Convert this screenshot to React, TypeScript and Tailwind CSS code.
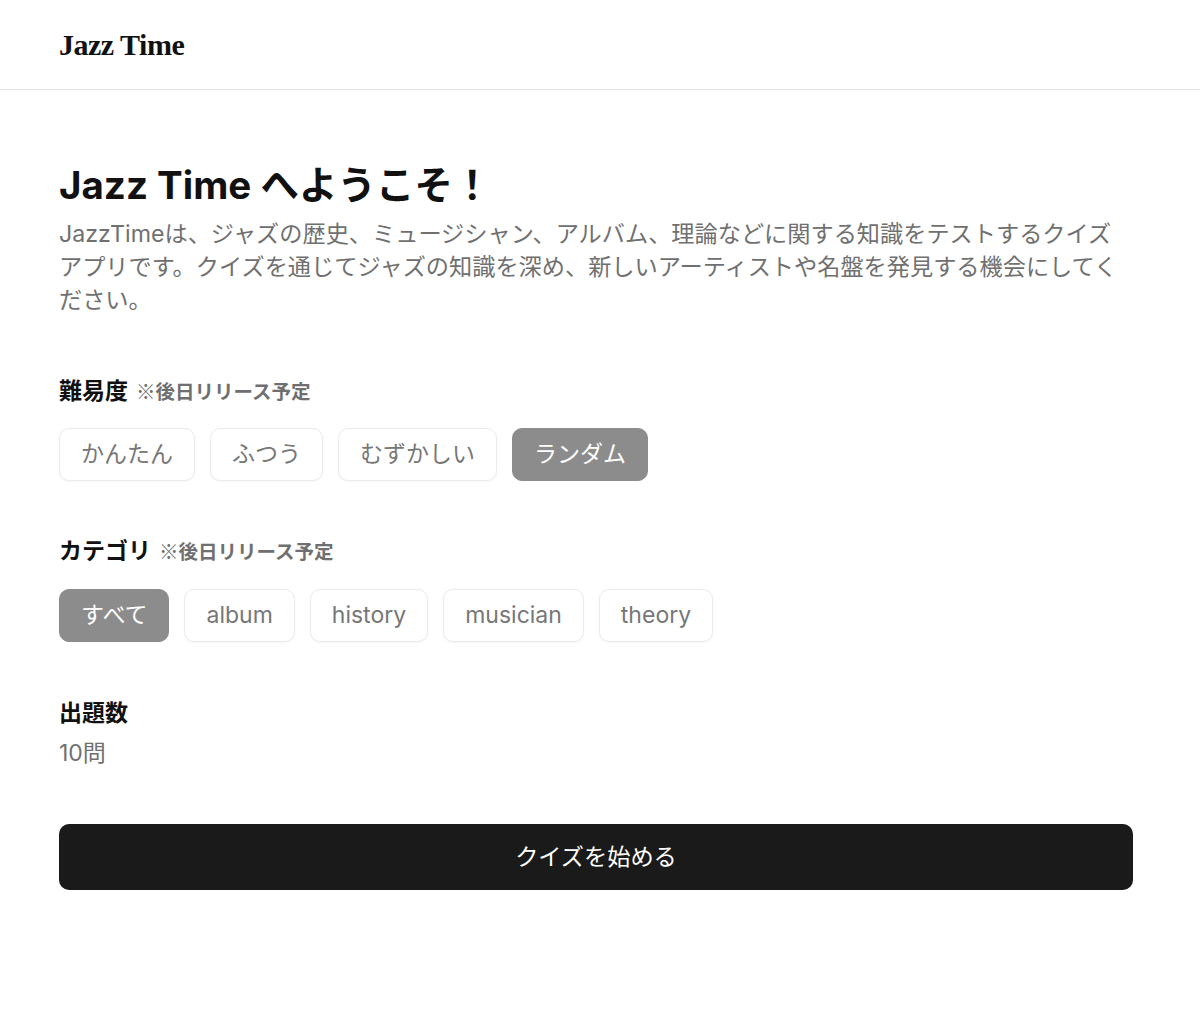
import React, { useState } from 'react';

const difficulties = ['かんたん', 'ふつう', 'むずかしい', 'ランダム'];
const categories = ['すべて', 'album', 'history', 'musician', 'theory'];

const font = "font-['Inter','Noto_Sans_CJK_JP',sans-serif]";

const Chip = ({ label, active, onClick }: { label: string; active: boolean; onClick: () => void }) => (
  <button
    onClick={onClick}
    className={
      active
        ? 'h-[53px] px-[21px] rounded-[10px] bg-[#8c8c8c] border border-[#8c8c8c] text-white text-[23px] leading-none'
        : 'h-[53px] px-[21px] rounded-[10px] bg-white border border-[#ebebeb] shadow-[0_1px_2px_rgba(0,0,0,0.04)] text-[#777777] text-[23px] leading-none'
    }
  >
    {label}
  </button>
);

const SectionLabel = ({ title }: { title: string }) => (
  <div className="flex items-baseline gap-[8px] leading-[28px]">
    <span className="text-[23px] font-bold text-[#111111]">{title}</span>
    <span className="font-['Noto_Sans_CJK_JP',sans-serif] text-[19.5px] font-bold text-[#6f6f6f]">※後日リリース予定</span>
  </div>
);

export default function App() {
  const [difficulty, setDifficulty] = useState('ランダム');
  const [category, setCategory] = useState('すべて');

  return (
    <div className={`min-h-screen bg-white ${font}`}>
      <header className="h-[90px] border-b border-[#e2e2e2] px-[59px] flex items-center">
        <span className="font-['Liberation_Serif',serif] font-bold text-[30px] tracking-[-0.5px] text-[#111111]">
          Jazz Time
        </span>
      </header>

      <main className="pl-[59px] pr-[67px] pt-[73px]">
        <h1 className="text-[38.5px] font-bold leading-[44px] text-[#111111]">
          Jazz Time へようこそ！
        </h1>
        <p className="mt-[11px] text-[23.2px] leading-[33px] text-[#707070]">
          JazzTimeは、ジャズの歴史、ミュージシャン、アルバム、理論などに関する知識をテストするクイズアプリです。クイズを通じてジャズの知識を深め、新しいアーティストや名盤を発見する機会にしてください。
        </p>

        <section className="mt-[60px]">
          <SectionLabel title="難易度" />
          <div className="mt-[23px] flex gap-[15px]">
            {difficulties.map(d => (
              <Chip key={d} label={d} active={difficulty === d} onClick={() => setDifficulty(d)} />
            ))}
          </div>
        </section>

        <section className="mt-[56px]">
          <SectionLabel title="カテゴリ" />
          <div className="mt-[24px] flex gap-[15px]">
            {categories.map(c => (
              <Chip key={c} label={c} active={category === c} onClick={() => setCategory(c)} />
            ))}
          </div>
        </section>

        <section className="mt-[57px]">
          <div className="text-[23px] font-bold leading-[28px] text-[#111111]">出題数</div>
          <div className="mt-[10px] text-[23px] leading-[33px] text-[#707070]">10問</div>
        </section>

        <button className="mt-[54px] w-full h-[66px] rounded-[10px] bg-[#1a1a1a] text-white text-[23.2px]">
          クイズを始める
        </button>
      </main>
    </div>
  );
}
